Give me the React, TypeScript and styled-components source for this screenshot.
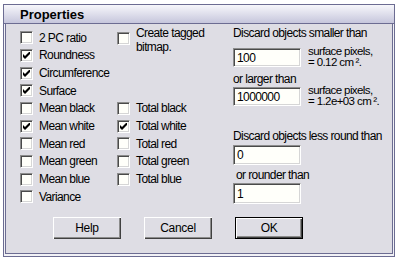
import React from "react";
import styled, { createGlobalStyle } from "styled-components";

const GlobalStyle = createGlobalStyle`
  html, body {
    margin: 0;
    padding: 0;
    background: #ffffff;
  }
  body {
    font-family: "Liberation Sans", Arial, sans-serif;
    font-size: 12px;
    color: #000;
  }
`;

const Dialog = styled.div`
  margin: 4px 0 0 3px;
  width: 390px;
  height: 251px;
  border: 1px solid #6c6c92;
  background: #f2f2f6;
  display: flex;
  flex-direction: column;
`;

const TitleBar = styled.div`
  height: 18px;
  flex: none;
  border-bottom: 1px solid #6c6c92;
  background: linear-gradient(#f7f7fb, #c6c6dc);
  padding-left: 16px;
  display: flex;
  align-items: center;
  font-weight: bold;
  font-size: 13px;
  letter-spacing: 0;
`;

const Body = styled.div`
  flex: 1;
  margin: 0 1px 2px 1px;
  border: 1px solid #6c6c92;
  border-top: none;
  background: #dedde4;
  padding: 2px 0 0 14px;
  display: flex;
  flex-direction: column;
  letter-spacing: -0.6px;
`;

const Main = styled.div`
  display: flex;
`;

const OptionGrid = styled.div`
  margin-top: 3px;
  display: grid;
  grid-template-columns: 97px 116px;
  grid-auto-rows: 17.67px;
`;

const Option = styled.label<{ $span?: number; $col?: number; $row?: number }>`
  display: flex;
  align-items: ${(p) => (p.$span ? "flex-start" : "center")};
  gap: 6px;
  grid-column: ${(p) => p.$col ?? 1};
  grid-row: ${(p) => (p.$row ? `${p.$row} / span ${p.$span ?? 1}` : "auto")};
  white-space: nowrap;
`;

const Box = styled.span<{ $top?: number }>`
  flex: none;
  width: 13px;
  height: 13px;
  box-sizing: border-box;
  margin-top: ${(p) => p.$top ?? 0}px;
  border: 1px solid;
  border-color: #8c8c8c #ffffff #ffffff #8c8c8c;
  box-shadow: inset 1px 1px 0 #4a4a4a, inset -1px -1px 0 #d6d6d6;
  background: #fffffa;
  display: flex;
  align-items: center;
  justify-content: center;
`;

const Wrapped = styled.span`
  white-space: normal;
  width: 80px;
  line-height: 14px;
  margin-top: -3px;
`;

const Side = styled.div`
  display: flex;
  flex-direction: column;
  width: 158px;
`;

const Caption = styled.div<{ $top?: number; $indent?: number }>`
  line-height: 14px;
  margin-top: ${(p) => p.$top ?? 0}px;
  padding-left: ${(p) => p.$indent ?? 0}px;
  white-space: nowrap;
`;

const FieldRow = styled.div<{ $top?: number }>`
  display: flex;
  gap: 7px;
  margin-top: ${(p) => p.$top ?? 0}px;
`;

const Field = styled.div<{ $h?: number }>`
  flex: none;
  width: 68px;
  height: ${(p) => p.$h ?? 20}px;
  box-sizing: border-box;
  border: 1px solid;
  border-color: #8c8c8c #ffffff #ffffff #8c8c8c;
  box-shadow: inset 1px 1px 0 #4a4a4a, inset -1px -1px 0 #d6d6d6;
  background: #fffffa;
  padding-left: 3px;
  display: flex;
  align-items: center;
`;

const Unit = styled.div`
  font-size: 11.5px;
  line-height: 11px;
  margin-top: -2px;
  white-space: nowrap;
`;

const Sup = styled.span`
  margin-left: 2px;
`;

const ButtonRow = styled.div`
  display: flex;
  gap: 23px;
  margin-top: 11px;
  padding-left: 33px;
`;

const Button = styled.div<{ $default?: boolean }>`
  width: 68px;
  height: 22px;
  box-sizing: border-box;
  display: flex;
  align-items: center;
  justify-content: center;
  background: #dedde4;
  border: ${(p) => (p.$default ? "1px solid #000" : "none")};
  box-shadow: inset 1px 1px 0 #ffffff, inset -1px -1px 0 #404040,
    inset -2px -2px 0 #8c8c8c;
  letter-spacing: -0.3px;
`;

const Check = () => (
  <svg width="7" height="7" viewBox="0 0 7 7">
    <path d="M0 2 L2 4 L6 0 L7 0 L7 2 L2 7 L0 5 Z" fill="#000" />
  </svg>
);

type Opt = { label: string; checked?: boolean; col: number; row: number };

const options: Opt[] = [
  { label: "2 PC ratio", col: 1, row: 1 },
  { label: "Roundness", checked: true, col: 1, row: 2 },
  { label: "Circumference", checked: true, col: 1, row: 3 },
  { label: "Surface", checked: true, col: 1, row: 4 },
  { label: "Mean black", col: 1, row: 5 },
  { label: "Total black", col: 2, row: 5 },
  { label: "Mean white", checked: true, col: 1, row: 6 },
  { label: "Total white", checked: true, col: 2, row: 6 },
  { label: "Mean red", col: 1, row: 7 },
  { label: "Total red", col: 2, row: 7 },
  { label: "Mean green", col: 1, row: 8 },
  { label: "Total green", col: 2, row: 8 },
  { label: "Mean blue", col: 1, row: 9 },
  { label: "Total blue", col: 2, row: 9 },
  { label: "Variance", col: 1, row: 10 },
];

export default function App() {
  return (
    <>
      <GlobalStyle />
      <Dialog>
        <TitleBar>Properties</TitleBar>
        <Body>
          <Main>
            <OptionGrid>
              {options.map((o) => (
                <Option key={o.label} $col={o.col} $row={o.row}>
                  <Box>{o.checked && <Check />}</Box>
                  <span>{o.label}</span>
                </Option>
              ))}
              <Option $col={2} $row={1} $span={2}>
                <Box $top={3} />
                <Wrapped>Create tagged bitmap.</Wrapped>
              </Option>
            </OptionGrid>
            <Side>
              <Caption>Discard objects smaller than</Caption>
              <FieldRow $top={8}>
                <Field $h={19}>100</Field>
                <Unit>
                  surface pixels,
                  <br />= 0.12 cm<Sup>²</Sup>.
                </Unit>
              </FieldRow>
              <Caption $top={4}>or larger than</Caption>
              <FieldRow $top={1}>
                <Field $h={19}>1000000</Field>
                <Unit>
                  surface pixels,
                  <br />= 1.2e+03 cm<Sup>²</Sup>.
                </Unit>
              </FieldRow>
              <Caption $top={22}>Discard objects less round than</Caption>
              <FieldRow $top={2}>
                <Field>0</Field>
              </FieldRow>
              <Caption $top={3} $indent={3}>
                or rounder than
              </Caption>
              <FieldRow $top={1}>
                <Field $h={21}>1</Field>
              </FieldRow>
            </Side>
          </Main>
          <ButtonRow>
            <Button>Help</Button>
            <Button>Cancel</Button>
            <Button $default>OK</Button>
          </ButtonRow>
        </Body>
      </Dialog>
    </>
  );
}
